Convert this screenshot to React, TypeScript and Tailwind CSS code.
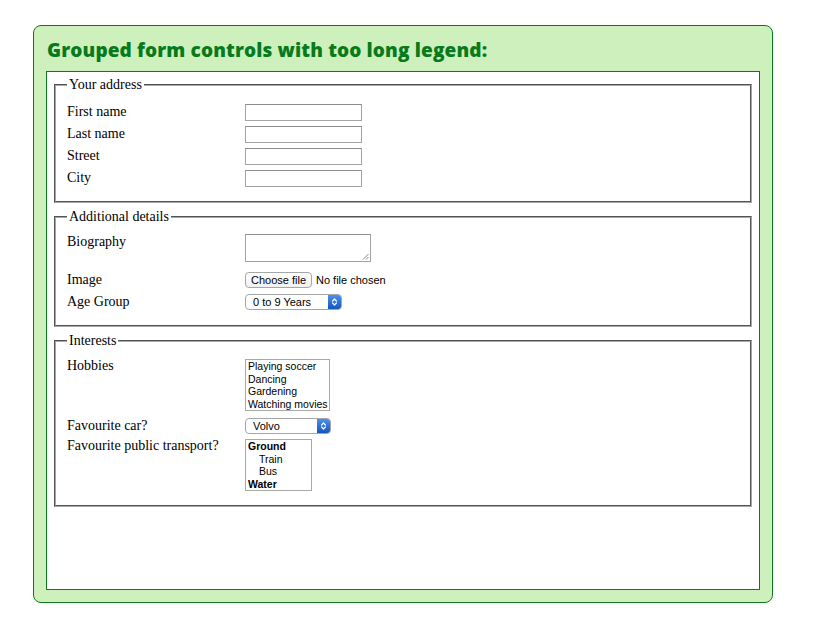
import React from "react";

function Chevrons() {
  return (
    <svg width="7" height="10" viewBox="0 0 7 10" fill="none" stroke="white" strokeWidth="1.2" strokeLinecap="round" strokeLinejoin="round">
      <path d="M1.6 4 L3.5 2 L5.4 4" />
      <path d="M1.6 6 L3.5 8 L5.4 6" />
    </svg>
  );
}

function Select({ value, className }: { value: string; className: string }) {
  return (
    <div className={`flex h-[16px] items-stretch overflow-hidden rounded-[4px] border border-[#a6a6a6] bg-white ${className}`}>
      <span className="flex-1 pl-[7px] text-[11px] leading-[14px] text-black">{value}</span>
      <span className="flex w-[13px] items-center justify-center bg-linear-to-b from-[#4b90f0] to-[#1456bd]">
        <Chevrons />
      </span>
    </div>
  );
}

function TextInput() {
  return <input type="text" className="h-[17px] w-[117px] border border-[#a3a3a3] border-t-[#8c8c8c] bg-white" />;
}

function Listbox({ items, className }: { items: { text: string; kind?: "group" | "child" }[]; className: string }) {
  return (
    <div className={`overflow-hidden whitespace-nowrap border border-[#a9a9a9] bg-white pl-[2px] text-[10.5px] leading-[12.5px] text-black ${className}`}>
      {items.map((it) => (
        <div
          key={it.text}
          className={it.kind === "group" ? "font-bold" : it.kind === "child" ? "pl-[11px]" : ""}
        >
          {it.text}
        </div>
      ))}
    </div>
  );
}

function Row({ label, children }: { label: string; children: React.ReactNode }) {
  return (
    <div className="flex h-[22px] items-center">
      <div className="w-[178px] leading-[22px]">{label}</div>
      {children}
    </div>
  );
}

export default function App() {
  return (
    <div className="min-h-screen bg-white pl-[33px] pt-[25px] font-['Liberation_Serif',serif] text-[14px] text-black">
      <div className="flex h-[578px] w-[740px] flex-col rounded-lg border border-[#0b7a1e] bg-[#cdf0bd] px-3 pb-3 pt-3">
        <h2 className="mb-[9px] pl-[1px] pt-[1px] font-['Open_Sans',sans-serif] text-[19px] font-extrabold leading-[23px] tracking-[0.14px] text-[#077a1c]">
          Grouped form controls with too long legend:
        </h2>

        <div className="flex-1 border border-[#0b7a1e] bg-white px-[7px] pt-[5px]">
          <fieldset className="border-2 border-[#a8a8a8] px-[11px] pb-[12px] pt-[8px] [border-style:groove]">
            <legend className="px-[2px] leading-[16px]">Your address</legend>
            <Row label="First name"><TextInput /></Row>
            <Row label="Last name"><TextInput /></Row>
            <Row label="Street"><TextInput /></Row>
            <Row label="City"><TextInput /></Row>
          </fieldset>

          <fieldset className="mt-[6px] border-2 border-[#a8a8a8] px-[11px] pb-[12px] pt-[8px] [border-style:groove]">
            <legend className="px-[2px] leading-[16px]">Additional details</legend>
            <div className="flex h-[36px] items-start">
              <div className="w-[178px] leading-[18px]">Biography</div>
              <div className="relative mt-[1px] h-[28px] w-[126px] border border-[#a3a3a3] border-t-[#8c8c8c] bg-white">
                <svg className="absolute bottom-[1px] right-[1px]" width="7" height="7" viewBox="0 0 7 7" stroke="#8a8a8a" strokeWidth="1">
                  <path d="M1 6.5 L6.5 1" />
                  <path d="M4 6.5 L6.5 4" />
                </svg>
              </div>
            </div>
            <Row label="Image">
              <div className="flex items-center font-['Liberation_Sans',sans-serif] text-[11px]">
                <span className="flex h-[16px] w-[67px] items-center justify-center rounded-[4px] border border-[#a6a6a6] bg-linear-to-b from-white to-[#f1f1f1] leading-[14px]">
                  Choose file
                </span>
                <span className="ml-[4px]">No file chosen</span>
              </div>
            </Row>
            <Row label="Age Group">
              <div className="font-['Liberation_Sans',sans-serif]">
                <Select value="0 to 9 Years" className="w-[97px]" />
              </div>
            </Row>
          </fieldset>

          <fieldset className="mt-[6px] border-2 border-[#a8a8a8] px-[11px] pb-[12px] pt-[8px] [border-style:groove]">
            <legend className="px-[2px] leading-[16px]">Interests</legend>
            <div className="flex h-[58px] items-start">
              <div className="w-[178px] leading-[18px]">Hobbies</div>
              <Listbox
                className="mt-[2px] h-[52px] w-[85px] font-['Liberation_Sans',sans-serif]"
                items={[
                  { text: "Playing soccer" },
                  { text: "Dancing" },
                  { text: "Gardening" },
                  { text: "Watching movies" },
                ]}
              />
            </div>
            <Row label="Favourite car?">
              <div className="font-['Liberation_Sans',sans-serif]">
                <Select value="Volvo" className="w-[86px]" />
              </div>
            </Row>
            <div className="flex h-[56px] items-start">
              <div className="w-[178px] leading-[18px]">Favourite public transport?</div>
              <Listbox
                className="mt-[2px] h-[52px] w-[67px] font-['Liberation_Sans',sans-serif]"
                items={[
                  { text: "Ground", kind: "group" },
                  { text: "Train", kind: "child" },
                  { text: "Bus", kind: "child" },
                  { text: "Water", kind: "group" },
                ]}
              />
            </div>
          </fieldset>
        </div>
      </div>
    </div>
  );
}
